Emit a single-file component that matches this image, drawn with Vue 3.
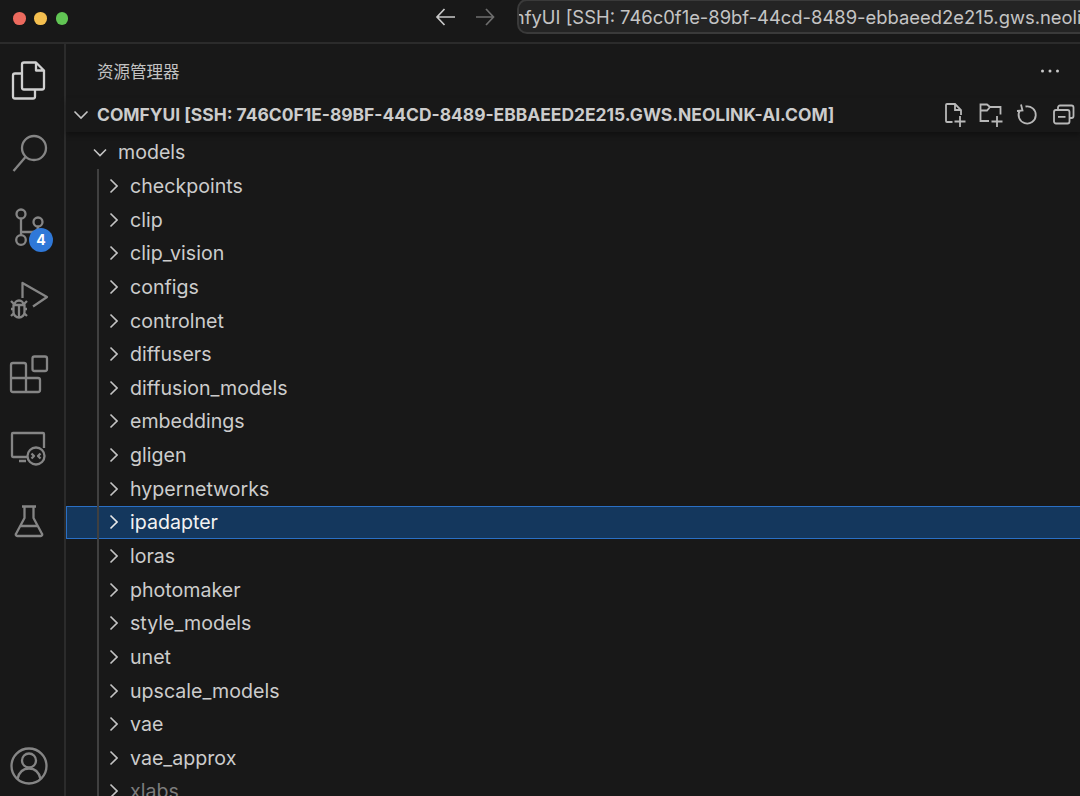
<script setup>
const folders = ['checkpoints','clip','clip_vision','configs','controlnet','diffusers','diffusion_models','embeddings','gligen','hypernetworks','ipadapter','loras','photomaker','style_models','unet','upscale_models','vae','vae_approx','xlabs']
</script>

<template>
  <div class="window">
    <header class="titlebar">
      <div class="lights">
        <span class="light red"></span>
        <span class="light yellow"></span>
        <span class="light green"></span>
      </div>
      <div class="nav">
        <svg class="arrow" width="24" height="24" viewBox="0 0 24 24"><path d="M21 12H3.500M10.500 4 3 12l7.500 8"/></svg>
        <svg class="arrow dim" width="24" height="24" viewBox="0 0 24 24"><path d="M3 12h17.500M13 4l7.500 8-7.500 8"/></svg>
      </div>
      <div class="command"><span class="command-text">ComfyUI [SSH: 746c0f1e-89bf-44cd-8489-ebbaeed2e215.gws.neolink-ai.com]</span></div>
    </header>
    <div class="main">
      <nav class="activity">
        <div class="slot">
          <svg class="aicon bright" width="48" height="48" viewBox="0 0 48 48"><path d="M18 5.500h12l8 8v17a2 2 0 0 1-2 2H18a2 2 0 0 1-2-2v-23a2 2 0 0 1 2-2zM30 5.500v8h8M16 16.500H9a2 2 0 0 0-2 2v21a2 2 0 0 0 2 2h18a2 2 0 0 0 2-2v-7"/></svg>
        </div>
        <div class="slot">
          <svg class="aicon" width="48" height="48" viewBox="0 0 48 48"><circle cx="28" cy="18" r="12"/><path d="M19.500 27 7.500 41"/></svg>
        </div>
        <div class="slot">
          <svg class="aicon" width="48" height="48" viewBox="0 0 48 48"><circle cx="15" cy="10" r="4.500"/><circle cx="15" cy="36" r="4.800"/><circle cx="32" cy="18" r="4.500"/><path d="M15 14.500V31M15 28h11q6 0 6-5.500"/></svg>
          <span class="badge">4</span>
        </div>
        <div class="slot">
          <svg class="aicon" width="48" height="48" viewBox="0 0 48 48"><path d="M16.500 21V6L41 20 27 29.500"/><path d="M8.500 28a4.500 4.500 0 0 1 9 0M7.500 28h11v7a5.500 5.500 0 0 1-11 0zM13 28v12M7.500 32H5M18.500 32H21M7.500 36.500l-2.500 2.500M18.500 36.500l2.500 2.500M8 27l-3-3M18 27l3-3" stroke-width="2"/></svg>
        </div>
        <div class="slot">
          <svg class="aicon" width="48" height="48" viewBox="0 0 48 48"><rect x="26.500" y="5.500" width="14.500" height="14.500" rx="2"/><path d="M20 27V14a2 2 0 0 0-2-2H7a2 2 0 0 0-2 2v25a2 2 0 0 0 2 2h25a2 2 0 0 0 2-2V29a2 2 0 0 0-2-2zM5 27h15v14"/></svg>
        </div>
        <div class="slot">
          <svg class="aicon" width="48" height="48" viewBox="0 0 48 48"><path d="M21 33H7a1 1 0 0 1-1-1V10a1 1 0 0 1 1-1h30a1 1 0 0 1 1 1v14M13 37h7"/><circle cx="30" cy="32" r="8.500"/><path d="m25.500 29.500 2.500 2.500-2.500 2.500M34.500 29.500 32 32l2.500 2.500" stroke-width="1.500"/></svg>
        </div>
        <div class="slot">
          <svg class="aicon" width="48" height="48" viewBox="0 0 48 48"><path d="M16 8.500h14M18.500 8.500V20L10.200 35.500a1.500 1.500 0 0 0 1.300 2.500h23a1.500 1.500 0 0 0 1.300-2.500L27.500 20V8.500M14 28h18"/></svg>
        </div>
        <div class="slot account">
          <svg class="aicon" width="48" height="48" viewBox="0 0 48 48"><circle cx="23" cy="24" r="17.500"/><circle cx="23" cy="18.500" r="7"/><path d="M11.500 37c1.500-7 6-10.500 11.500-10.500S33 30 34.500 37"/></svg>
        </div>
      </nav>
      <aside class="sidebar">
        <div class="side-title">
          <span class="side-label">资源管理器</span>
          <svg class="dots" width="24" height="8" viewBox="0 0 24 8"><circle cx="4.500" cy="4" r="1.500"/><circle cx="12" cy="4" r="1.500"/><circle cx="19.500" cy="4" r="1.500"/></svg>
        </div>
        <div class="section">
          <svg class="chev down top-chev" width="16" height="10" viewBox="0 0 16 10"><path d="m1.500 1.500 6.500 6.500 6.500-6.500"/></svg>
          <span class="section-name">COMFYUI [SSH: 746C0F1E-89BF-44CD-8489-EBBAEED2E215.GWS.NEOLINK-AI.COM]</span>
          <div class="actions">
            <svg class="act" width="28" height="28" viewBox="0 0 28 28"><path d="M12.500 21H7a1 1 0 0 1-1-1V4a1 1 0 0 1 1-1h8l6 6v5M15 3v6h6M20 15v11M14.500 20.500h11"/></svg>
            <svg class="act" width="28" height="28" viewBox="0 0 28 28"><path d="M13 20H4.500V3.500H11l3 2.500h10.500v7.500M4.500 9.500H11l3-3.500M21 15v11M15.500 20.500h11"/></svg>
            <svg class="act" width="28" height="28" viewBox="0 0 28 28"><path d="M12.500 5.500A8.600 8.600 0 1 1 6.800 9.500M8 3.500l1.500 6-5.500.500"/></svg>
            <svg class="act" width="28" height="28" viewBox="0 0 28 28"><path d="M9 8.500V6.500a2 2 0 0 1 2-2h11.500a2 2 0 0 1 2 2V15a2 2 0 0 1-2 2h-2M7 9h11.500a2 2 0 0 1 2 2v9.500a2 2 0 0 1-2 2H7a2 2 0 0 1-2-2V11a2 2 0 0 1 2-2zM9 15.800h7.500"/></svg>
          </div>
        </div>
        <div class="tree">
          <div class="row parent">
            <svg class="chev down" width="14" height="9" viewBox="0 0 14 9"><path d="m1 1.500 6 6 6-6"/></svg>
            <span>models</span>
          </div>
          <div class="children">
            <div v-for="f in folders" :key="f" class="row child" :class="{ selected: f === 'ipadapter', ignored: f === 'xlabs' }">
              <svg class="chev" width="9" height="16" viewBox="0 0 9 16"><path d="m1.500 1.500 6.500 6.500-6.500 6.500"/></svg>
              <span>{{ f }}</span>
            </div>
          </div>
        </div>
      </aside>
    </div>
  </div>
</template>

<style scoped>
.window {
  width: 1080px;
  height: 796px;
  overflow: hidden;
  display: flex;
  flex-direction: column;
  background: #181818;
  color: #cccccc;
  font-family: Inter, "Noto Sans CJK SC", sans-serif;
}
svg { fill: none; display: block; }
.titlebar {
  height: 44px;
  flex: none;
  display: flex;
  align-items: flex-start;
  border-bottom: 2px solid #2b2b2b;
  box-sizing: border-box;
  overflow: hidden;
}
.lights { display: flex; gap: 8.700px; padding: 12px 0 0 13px; }
.light { width: 12.600px; height: 12.600px; border-radius: 50%; }
.red { background: #ec6a5e; }
.yellow { background: #f4bf4f; }
.green { background: #61c554; }
.nav { display: flex; gap: 15px; margin: 5px 0 0 366px; }
.arrow path { stroke: #c8c8c8; stroke-width: 1.700; }
.arrow.dim path { stroke: #6e6e6e; }
.command {
  margin: -1px 0 0 20px;
  flex: none;
  width: 700px;
  height: 35px;
  box-sizing: border-box;
  border: 2px solid #3a3a3a;
  border-radius: 10px;
  background: #242424;
  overflow: hidden;
  line-height: 33px;
  font-size: 18.400px;
  white-space: nowrap;
  color: #c4c4c4;
}
.command-text { display: block; margin-left: -35px; }
.main { flex: 1; display: flex; min-height: 0; }
.activity {
  width: 66px;
  flex: none;
  box-sizing: border-box;
  border-right: 2px solid #2b2b2b;
  padding-left: 6px;
  display: flex;
  flex-direction: column;
}
.slot { position: relative; height: 73.500px; flex: none; display: flex; align-items: center; }
.account { margin-top: auto; height: 54px; align-items: flex-start; }
.aicon * { stroke: #858585; stroke-width: 2.300; stroke-linejoin: round; }
.aicon.bright * { stroke: #d0d0d0; }
.badge {
  position: absolute;
  left: 23px;
  top: 37px;
  width: 24px;
  height: 24px;
  border-radius: 50%;
  background: #2f78d8;
  color: #fff;
  font-size: 14px;
  font-weight: 700;
  line-height: 24px;
  text-align: center;
}
.sidebar { flex: 1; min-width: 0; display: flex; flex-direction: column; }
.side-title {
  height: 54px;
  flex: none;
  display: flex;
  align-items: center;
  justify-content: space-between;
  padding: 0 18px 0 31px;
}
.side-label { font-size: 16.500px; color: #c2c2c2; }
.dots circle { fill: #c8c8c8; }
.section {
  height: 34px;
  flex: none;
  display: flex;
  align-items: center;
  white-space: nowrap;
  position: relative;
  box-shadow: 0 3px 5px rgba(0, 0, 0, 0.35);
  z-index: 1;
}
.top-chev { margin-left: 7px; }
.section-name { margin: 0 0 2px 8px; font-size: 17.430px; font-weight: 700; color: #cccccc; }
.chev path { stroke: #c4c4c4; stroke-width: 1.600; }
.actions { margin-left: auto; padding-right: 3px; display: flex; gap: 8.500px; }
.act path { stroke: #b8b8b8; stroke-width: 1.800; }
.tree { flex: 1; min-height: 0; padding-top: 3.500px; font-size: 19.600px; }
.row {
  height: 33.650px;
  box-sizing: border-box;
  display: flex;
  align-items: center;
  white-space: nowrap;
}
.parent { padding-left: 27px; gap: 11px; }
.children { position: relative; }
.children::before {
  content: "";
  position: absolute;
  left: 31px;
  top: 0;
  bottom: 0;
  width: 2px;
  background: #404040;
  z-index: 1;
}
.child { padding-left: 43px; gap: 12px; }
.selected {
  background: #14375d;
  color: #f2f2f2;
  margin-right: -2px;
  outline: 1px solid #2a6fc4;
  outline-offset: -1px;
}
.selected .chev path { stroke: #e8e8e8; }
.ignored { color: #7c7c7c; }
</style>

<style>
html, body { background: #181818; overflow: hidden; }
</style>
